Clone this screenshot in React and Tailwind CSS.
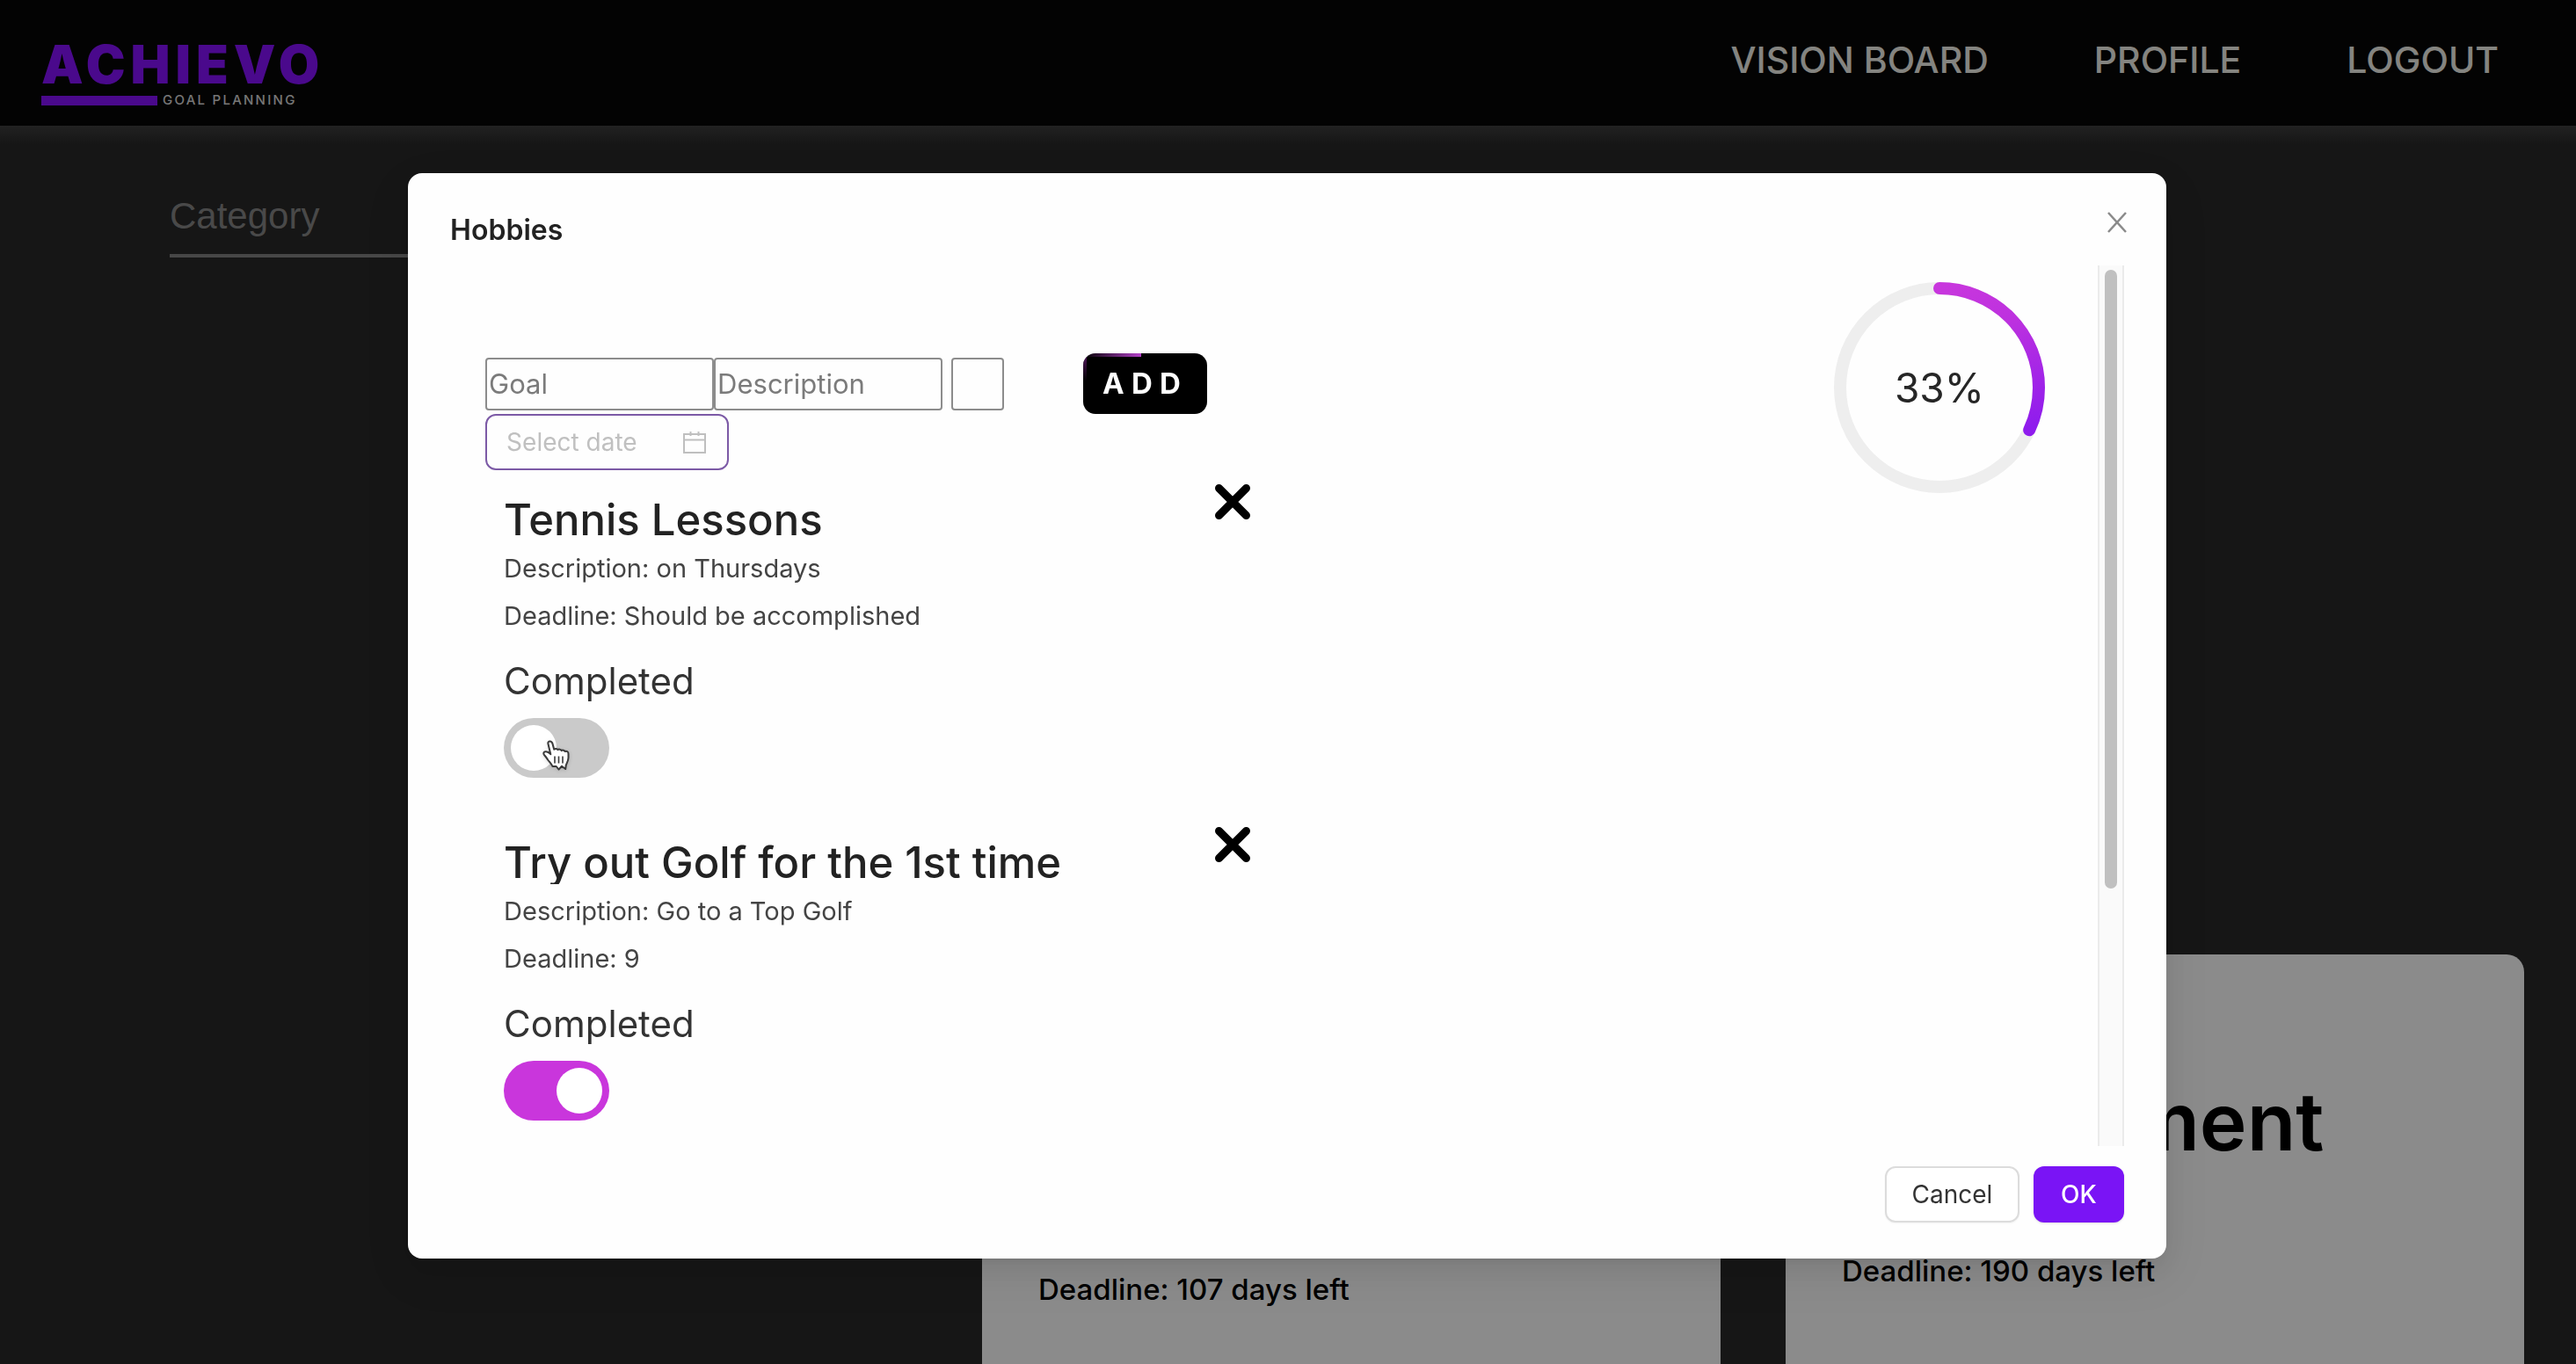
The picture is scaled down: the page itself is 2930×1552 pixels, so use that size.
import React from "react";

const goals = [
  {
    id: "tennis",
    title: "Tennis Lessons",
    description: "on Thursdays",
    deadline: "Should be accomplished",
    completed: false,
    hovered: true,
  },
  {
    id: "golf",
    title: "Try out Golf for the 1st time",
    description: "Go to a Top Golf",
    deadline: "9",
    completed: true,
    hovered: false,
  },
];

function Logo() {
  return (
    <a href="#home" className="block">
      <span className="block text-[60px] leading-[62px] font-black tracking-widest text-[#8712ff]">ACHIEVO</span>
      <span className="mt-0.5 flex items-center gap-1.5">
        <span className="block h-[11px] w-[132px] bg-[#8712ff]" />
        <span className="text-[15px] leading-4 font-medium tracking-[0.15em] text-[#d8d8d8]">GOAL PLANNING</span>
      </span>
    </a>
  );
}

function Header() {
  return (
    <header className="flex h-[143px] shrink-0 items-start justify-between bg-[#070707] pr-[88px] pl-[47px]">
      <div className="pt-[42px]">
        <Logo />
      </div>
      <nav className="flex gap-[120px] pt-11 text-[41px] leading-[48px] font-medium text-[#f0f0ea]">
        <a href="#vision">VISION BOARD</a>
        <a href="#profile">PROFILE</a>
        <a href="#logout">LOGOUT</a>
      </nav>
    </header>
  );
}

function Board() {
  return (
    <main className="flex min-h-0 flex-1 items-start justify-between bg-[#282828] bg-[linear-gradient(to_bottom,#3e3e3e,#282828_22px)] pr-[59px] pl-[193px]">
      <input
        aria-label="Category"
        placeholder="Category"
        className="mt-[67px] h-[83px] w-[560px] border-b-4 border-[#828282] bg-transparent pb-2 font-['Liberation_Sans',sans-serif] text-[42px] outline-none placeholder:text-[#868686]"
      />
      <div className="flex gap-[74px] pt-[943px]">
        <article className="w-[840px] rounded-[20px] bg-[#fdfdfd] px-16 pt-[361px] pb-40">
          <p className="text-[33px] leading-10 font-medium text-black">Deadline: 107 days left</p>
        </article>
        <article className="w-[840px] rounded-[20px] bg-[#fdfdfd] px-16 pt-[140px] pb-40">
          <h2 className="text-[91px] leading-[100px] font-semibold text-black">Employment</h2>
          <p className="mt-[100px] text-[33px] leading-10 font-medium text-black">Deadline: 190 days left</p>
        </article>
      </div>
    </main>
  );
}

function CalendarIcon() {
  return (
    <svg viewBox="0 0 26 26" className="size-[26px]" fill="none" stroke="#bfbfbf" strokeWidth="2" aria-hidden="true">
      <path d="M1 4h24v21H1zM1 10.500h24M8.500 1v5M17.500 1v5" />
    </svg>
  );
}

function HandCursor() {
  return (
    <svg viewBox="0 0 32 36" className="absolute top-[25px] left-11 h-9 w-8 drop-shadow-sm" aria-hidden="true">
      <path
        d="M6.500 4.500C6 2.500 7 1.500 8.500 1.500s2.500 1 3 2.800l1.700 6.500c.8-1.200 3.600-1.200 4.300.4.900-1 3.600-.8 4.200.9 1-.9 3.400-.5 4 .9 2.200-.6 3.800.4 3.800 2.700v4.500c0 3-1.500 5.500-2.700 8.300l-.6 4.500-4.200-3.200-3.500 3.700-2.800-3.500H11.500c-1-2.500-3-4.500-5-7-1.500-2-2.500-4-4.300-5.800-1.500-1.600-1-3.500.9-3.900 2-.4 4.400.8 6.200 2.900z"
        fill="#fff"
        stroke="#3a3a3a"
        strokeWidth="2"
        strokeLinejoin="round"
      />
      <path d="M14 18.500v8M18.500 18.500v8M23 18.500v8" stroke="#3a3a3a" strokeWidth="1.600" fill="none" />
    </svg>
  );
}

function ProgressCircle({ percent }) {
  const length = 2 * Math.PI * 113;
  return (
    <div className="relative mt-[19px] mr-[60px] size-[240px] shrink-0">
      <svg viewBox="0 0 240 240" className="size-full" fill="none" aria-hidden="true">
        <defs>
          <linearGradient id="arc" gradientUnits="userSpaceOnUse" x1="240" y1="120" x2="60" y2="180">
            <stop offset="0" stopColor="#c937dd" />
            <stop offset="0.350" stopColor="#bd31df" />
            <stop offset="1" stopColor="#8f1ced" />
          </linearGradient>
        </defs>
        <circle cx="120" cy="120" r="113" stroke="#eeeeee" strokeWidth="14" />
        <circle
          cx="120"
          cy="120"
          r="113"
          stroke="url(#arc)"
          strokeWidth="14"
          strokeLinecap="round"
          strokeDasharray={`${(length * (percent - 1)) / 100} ${length}`}
          transform="rotate(-90 120 120)"
        />
      </svg>
      <span className="absolute inset-0 flex items-center justify-center text-[46px] text-[#262626]">{percent}%</span>
    </div>
  );
}

function AddForm() {
  return (
    <form className="pl-10">
      <div className="flex h-[69px] items-center">
        <input
          aria-label="Goal"
          placeholder="Goal"
          className="h-[60px] w-[260px] rounded-[4px] border-2 border-[#8c8c8c] px-0.5 text-[31px] outline-none placeholder:text-[#7b7b7b]"
        />
        <input
          aria-label="Description"
          placeholder="Description"
          className="h-[60px] w-[260px] rounded-[4px] border-2 border-[#8c8c8c] px-0.5 text-[31px] outline-none placeholder:text-[#7b7b7b]"
        />
        <input
          aria-label="Color"
          className="ml-2.5 h-[60px] w-[60px] rounded-[4px] border-2 border-[#8c8c8c] outline-none"
        />
        <button
          type="button"
          className="relative ml-[90px] h-[69px] w-[141px] overflow-hidden rounded-[14px] bg-black text-[33px] font-bold tracking-[0.25em] text-white"
        >
          <span className="absolute top-0 left-0 h-1 w-[66px] bg-linear-to-r from-transparent to-[#b340c8]" />
          <span className="absolute top-0 left-0 h-8 w-1 bg-linear-to-t from-transparent to-[#571963]" />
          ADD
        </button>
      </div>
      <label className="flex h-16 w-[277px] items-center justify-between rounded-xl border-2 border-[#7c5aa6] pr-6 pl-[22px]">
        <input
          aria-label="Select date"
          placeholder="Select date"
          className="w-[180px] text-[28px] outline-none placeholder:text-[#c0c0c0]"
        />
        <CalendarIcon />
      </label>
    </form>
  );
}

function GoalItem({ goal }) {
  return (
    <li className="flex items-start pb-14 pl-[61px]">
      <div className="w-[809px] pt-[17px]">
        <h3 className="overflow-hidden text-[49px] leading-[48px] font-medium text-[#222222]">{goal.title}</h3>
        <p className="mt-1 text-[29px] leading-[54px] text-[#444444]">Description: {goal.description}</p>
        <p className="text-[29px] leading-[54px] text-[#444444]">Deadline: {goal.deadline}</p>
        <label htmlFor={goal.id} className="mt-[23px] block text-[42px] leading-[48px] text-[#333333]">
          Completed
        </label>
        <div className="relative mt-[18px] h-[68px] w-[120px]">
          <input
            id={goal.id}
            type="checkbox"
            defaultChecked={goal.completed}
            className="block h-[68px] w-[120px] appearance-none rounded-full bg-[#cacaca] p-2 before:block before:size-[52px] before:rounded-full before:bg-white checked:bg-[#c936dc] checked:before:ml-[52px]"
          />
          {goal.hovered && <HandCursor />}
        </div>
      </div>
      <button type="button" aria-label={`Delete ${goal.title}`} className="size-10">
        <svg viewBox="0 0 40 40" className="size-10" stroke="#000" strokeWidth="9" strokeLinecap="round" aria-hidden="true">
          <path d="M4.500 4.500l31 31M35.500 4.500l-31 31" />
        </svg>
      </button>
    </li>
  );
}

function GoalDialog() {
  return (
    <section
      role="dialog"
      aria-label="Hobbies"
      className="w-[68.3%] rounded-2xl bg-[#fefefe] px-12 shadow-[0_12px_32px_rgba(0,0,0,0.08),0_6px_12px_-8px_rgba(0,0,0,0.12),0_18px_56px_16px_rgba(0,0,0,0.05)]"
    >
      <div className="flex h-[105px] items-start justify-between">
        <h1 className="pt-[41px] text-[32px] leading-[48px] font-semibold text-[#222222]">Hobbies</h1>
        <button type="button" aria-label="Close" className="mt-10 -mr-2 flex size-8 items-center justify-center">
          <svg viewBox="0 0 22 24" className="h-6 w-[22px]" stroke="#8a8a8a" strokeWidth="2.500" aria-hidden="true">
            <path d="M1 1l20 22M21 1L1 23" />
          </svg>
        </button>
      </div>
      <div className="flex h-[1002px] overflow-hidden">
        <div className="flex flex-1 items-start justify-between">
          <div className="pt-[100px]">
            <AddForm />
            <ul className="pt-4">
              {goals.map((goal) => (
                <GoalItem key={goal.id} goal={goal} />
              ))}
            </ul>
          </div>
          <ProgressCircle percent={33} />
        </div>
        <div className="w-[30px] border-x-2 border-[#ebebeb] bg-[#fafafa] px-1.5 py-[5px]">
          <div className="h-[71%] rounded-full bg-[#c0c0c0]" />
        </div>
      </div>
      <div className="flex justify-end gap-4 pt-[23px] pb-[41px] text-[28px]">
        <button
          type="button"
          className="h-16 w-[153px] rounded-xl border-2 border-[#dcdcdc] bg-white text-[#333333] shadow-xs"
        >
          Cancel
        </button>
        <button type="button" className="h-16 w-[103px] rounded-xl bg-[#7a14f5] font-medium text-white shadow-sm">
          OK
        </button>
      </div>
    </section>
  );
}

export default function App() {
  return (
    <div className="flex h-screen flex-col overflow-hidden font-['Inter',sans-serif]">
      <Header />
      <Board />
      <div className="fixed inset-0 flex items-start justify-center bg-black/45 pt-[197px] pr-0.5">
        <GoalDialog />
      </div>
    </div>
  );
}
